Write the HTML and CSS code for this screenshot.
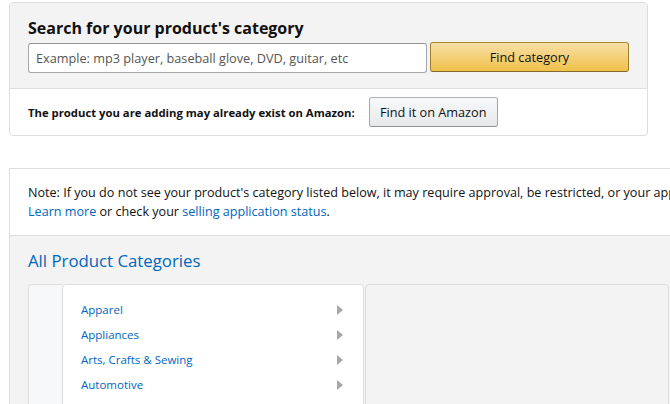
FILE: index.html
```html
<!DOCTYPE html>
<html>
<head>
<meta charset="utf-8">
<link rel="stylesheet" href="styles.css">
</head>
<body>
<div class="search-card">
  <div class="search-top">
    <h1 class="search-title">Search for your product's category</h1>
    <div class="search-row">
      <input class="search-input" type="text" placeholder="Example: mp3 player, baseball glove, DVD, guitar, etc">
      <button class="btn-primary">Find category</button>
    </div>
  </div>
  <div class="search-bottom">
    <span class="exist-label">The product you are adding may already exist on Amazon:</span>
    <button class="btn-secondary">Find it on Amazon</button>
  </div>
</div>

<div class="cat-card">
  <div class="note">
    Note: If you do not see your product's category listed below, it may require approval, be restricted, or your application is pending review.<br>
    <a href="#" class="link">Learn more</a> or check your <a href="#" class="link">selling application status</a>.
  </div>
  <div class="cat-body">
    <h2 class="cat-title">All Product Categories</h2>
    <div class="browser">
      <div class="col-gutter"></div>
      <ul class="col-list">
        <li class="cat-item"><a href="#" class="link">Apparel</a><span class="arrow"></span></li>
        <li class="cat-item"><a href="#" class="link">Appliances</a><span class="arrow"></span></li>
        <li class="cat-item"><a href="#" class="link">Arts, Crafts &amp; Sewing</a><span class="arrow"></span></li>
        <li class="cat-item"><a href="#" class="link">Automotive</a><span class="arrow"></span></li>
      </ul>
      <div class="col-detail"></div>
    </div>
  </div>
</div>
</body>
</html>
```

FILE: styles.css
```css
html, body {
  margin: 0;
  padding: 0;
  overflow: hidden;
  background: #fff;
}
body {
  font-family: "Open Sans", "Liberation Sans", Arial, sans-serif;
  color: #111;
  width: 670px;
  height: 404px;
}
.search-card {
  margin: 2px 0 0 9px;
  width: 639px;
  box-sizing: border-box;
  border: 1px solid #ddd;
  border-radius: 4px;
  overflow: hidden;
}
.search-top {
  background: #f3f3f3;
  padding: 14px 18px 15px 18px;
  border-bottom: 1px solid #ddd;
}
.search-title {
  margin: 0 0 3px 0;
  font-size: 16px;
  line-height: 22px;
  font-weight: 700;
  color: #111;
}
.search-row {
  display: flex;
  gap: 3px;
  align-items: flex-start;
}
.search-input {
  flex-shrink: 0;
  width: 399px;
  height: 30px;
  box-sizing: border-box;
  border: 1px solid #a6a6a6;
  border-top-color: #949494;
  border-radius: 3px;
  background: #fff;
  padding: 0 7px;
  font-family: inherit;
  font-size: 12.7px;
  margin: 1px 0 0 0;
}
.search-input::placeholder {
  color: #555;
}
.btn-primary {
  flex-shrink: 0;
  width: 199px;
  height: 30px;
  box-sizing: border-box;
  border: 1px solid;
  border-color: #a88734 #9c7e31 #846a29;
  border-radius: 3px;
  background: linear-gradient(to bottom, #f7dfa5, #f0c14b);
  font-family: inherit;
  font-size: 12.7px;
  color: #111;
  margin: 0;
  padding: 0;
}
.search-bottom {
  display: flex;
  align-items: center;
  gap: 14px;
  padding: 8px 18px 8px 18px;
}
.exist-label {
  font-size: 11.3px;
  font-weight: 700;
}
.btn-secondary {
  width: 129px;
  height: 30px;
  box-sizing: border-box;
  border: 1px solid;
  border-color: #adb1b8 #a2a6ac #8d9096;
  border-radius: 3px;
  background: linear-gradient(to bottom, #f7f8fa, #e7e9ec);
  font-family: inherit;
  font-size: 12.7px;
  color: #111;
  margin: 0;
  padding: 0;
}
.cat-card {
  margin: 32px 0 0 9px;
  width: 720px;
  border: 1px solid #ddd;
  border-right: none;
}
.note {
  padding: 14px 18px 14px 18px;
  font-size: 12.6px;
  line-height: 19px;
  white-space: nowrap;
  border-bottom: 1px solid #ddd;
}
.link {
  color: #0066c0;
  text-decoration: none;
}
.cat-body {
  background: #f3f3f3;
  padding: 14px 0 0 18px;
  height: 200px;
}
.cat-title {
  margin: 0 0 12px 0;
  font-size: 16.8px;
  line-height: 22px;
  font-weight: 400;
  color: #0066c0;
}
.browser {
  display: flex;
  height: 140px;
}
.col-gutter {
  width: 33px;
  background: #f7f8fa;
  border: 1px solid #ddd;
  border-right: none;
  border-radius: 4px 0 0 0;
}
.col-list {
  list-style: none;
  margin: 0;
  padding: 12px 20px 0 18px;
  width: 262px;
  background: #fff;
  border: 1px solid #ddd;
  border-radius: 4px 4px 0 0;
}
.cat-item {
  display: flex;
  justify-content: space-between;
  align-items: center;
  height: 25px;
  font-size: 11.5px;
}
.arrow {
  width: 0;
  height: 0;
  border-top: 5px solid transparent;
  border-bottom: 5px solid transparent;
  border-left: 6px solid #a7a7a7;
}
.col-detail {
  width: 302px;
  background: #f3f3f3;
  border: 1px solid #ddd;
  border-radius: 4px 4px 0 0;
  margin-left: 1px;
}
```
